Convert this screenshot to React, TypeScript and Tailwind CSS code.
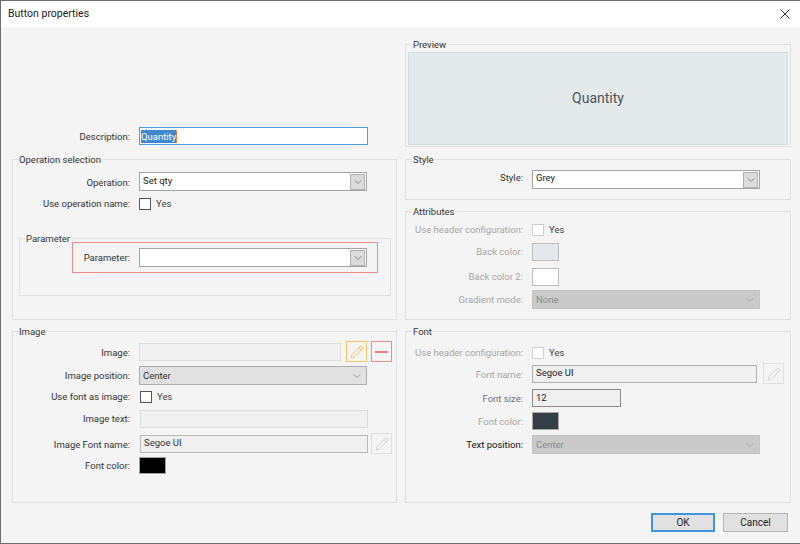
import type { ReactNode } from "react"
import { ChevronDown, Pencil } from "lucide-react"

function Group({ title, className, legendClass, children }: { title: string; className: string; legendClass?: string; children?: ReactNode }) {
  return (
    <div className={`border border-[#e0e0e0] ${className}`}>
      <div className={`-mt-[7px] h-[13px] w-fit bg-[#f4f4f4] px-px leading-[14px] ${legendClass ?? "ml-[5px]"}`}>{title}</div>
      {children}
    </div>
  )
}

function Row({ label, className, labelClass, children }: { label: string; className: string; labelClass?: string; children: ReactNode }) {
  return (
    <div className={`flex items-center ${className}`}>
      <div className={`w-[117px] shrink-0 whitespace-nowrap text-right leading-[14px] ${labelClass ?? "text-[#333]"}`}>{label}</div>
      <div className="ml-[9px] flex items-center">{children}</div>
    </div>
  )
}

function Combo({ value, className, valueClass }: { value: string; className: string; valueClass?: string }) {
  return (
    <div className={`flex h-[19px] items-center border border-[#a4a4a4] bg-white ${className}`}>
      <span className={`flex-1 pl-[3px] text-[#222] ${valueClass ?? ""}`}>{value}</span>
      <span className="mr-px flex h-[16px] w-[15px] items-center justify-center border border-[#b0b0b0] bg-[#dcdcdc]">
        <ChevronDown size={12} strokeWidth={1.3} className="text-[#606060]" />
      </span>
    </div>
  )
}

function FlatSelect({ value, className, bg, color, border }: { value: string; className: string; bg: string; color: string; border: string }) {
  return (
    <div className={`flex h-[19px] items-center border ${bg} ${color} ${border} ${className}`}>
      <span className="flex-1 pl-[3px] pt-px">{value}</span>
      <ChevronDown size={12} strokeWidth={1.2} className="mr-[3px] opacity-70" />
    </div>
  )
}

function Check({ label, disabled }: { label: string; disabled?: boolean }) {
  return (
    <div className="flex items-center">
      <span className={`h-[12px] w-[12px] border ${disabled ? "border-[#d0d0d0] bg-white" : "border-[#555] bg-white"}`} />
      <span className="ml-[5px] leading-[12px] text-[#444]">{label}</span>
    </div>
  )
}

function Swatch({ className }: { className: string }) {
  return <div className={`w-[27px] border ${className}`} />
}

function EditButton({ className, iconClass }: { className: string; iconClass: string }) {
  return (
    <span className={`flex h-[21px] w-[21px] items-center justify-center border ${className}`}>
      <Pencil size={14} strokeWidth={1.5} className={iconClass} />
    </span>
  )
}

const disabledLabel = "text-[#a6a6a6]"
const rightLegend = "ml-[6px]"

export default function App() {
  return (
    <div className="flex h-[544px] w-[800px] flex-col overflow-hidden border-y border-l border-[#6e6e6e] bg-[#f4f4f4] font-['Roboto',sans-serif] text-[9.5px] text-[#333]">
      <div className="flex h-[26px] items-center justify-between bg-white pl-[7px] pr-[10px]">
        <span className="text-[10.5px] text-[#222]">Button properties</span>
        <svg width="10" height="10" viewBox="0 0 10 10" className="mb-[1px]">
          <path d="M0.5 0.5 9.5 9.5M9.5 0.5 0.5 9.5" stroke="#333" strokeWidth="1" fill="none" />
        </svg>
      </div>

      <div className="flex">
        <div className="ml-[11px] w-[385px]">
          <div className="mt-[100px] flex items-center">
            <div className="w-[118px] pt-[2px] text-right leading-[14px]">Description:</div>
            <div className="ml-[9px] flex h-[18px] w-[229px] items-center border border-[#4a9fdc] bg-white pl-px">
              <span className="border-r border-[#e8853a] bg-[#3f87cf] leading-[13px] text-white">Quantity</span>
            </div>
          </div>

          <Group title="Operation selection" className="mt-[14px] h-[161px]">
            <Row label="Operation:" labelClass="pt-[2px] text-[#333]" className="mt-[6px]">
              <Combo value="Set qty" className="w-[228px]" />
            </Row>
            <Row label="Use operation name:" className="mt-[7px] h-[12px]">
              <Check label="Yes" />
            </Row>
            <Group title="Parameter" className="ml-[6px] mt-[28px] h-[58px] w-[372px]">
              <div className="-mt-[3px] ml-[52px] flex h-[31px] w-[306px] items-center border border-[#ee8a8a]">
                <div className="w-[57px] shrink-0 text-right leading-[14px]">Parameter:</div>
                <div className="ml-[9px]">
                  <Combo value="" className="w-[228px]" />
                </div>
              </div>
            </Group>
          </Group>

          <Group title="Image" className="mt-[11px] h-[172px]">
            <Row label="Image:" labelClass="pt-[2px] text-[#333]" className="mt-[3px] h-[21px]">
              <div className="h-[18px] w-[202px] border border-[#dcdcdc] bg-[#f1f1f1]" />
              <EditButton className="ml-[5px] border-[#f6c761]" iconClass="text-[#f2bc4e]" />
              <span className="ml-[4px] flex h-[21px] w-[21px] items-center justify-center border border-[#ef8a8d]">
                <span className="h-[2px] w-[13px] bg-[#ef8083]" />
              </span>
            </Row>
            <Row label="Image position:" className="mt-[4px]">
              <FlatSelect value="Center" className="w-[228px]" bg="bg-[#e1e1e1]" color="text-[#333]" border="border-[#adadad]" />
            </Row>
            <Row label="Use font as image:" className="mt-[6px] h-[12px]">
              <div className="ml-px">
                <Check label="Yes" />
              </div>
            </Row>
            <Row label="Image text:" className="mt-[7px]">
              <div className="ml-px h-[18px] w-[228px] border border-[#dcdcdc] bg-[#f1f1f1]" />
            </Row>
            <Row label="Image Font name:" labelClass="pt-[2px] text-[#333]" className="mt-[5px] h-[21px]">
              <div className="ml-px flex h-[18px] w-[228px] items-center border border-[#b9b9b9] bg-[#f0f0f0] pl-[3px] text-[#333]">Segoe UI</div>
              <EditButton className="ml-[3px] border-[#e0e0e0]" iconClass="text-[#cfcfcf]" />
            </Row>
            <Row label="Font color:" className="mt-[3px]">
              <Swatch className="h-[17px] border-[#a0a0a0] bg-black" />
            </Row>
          </Group>
        </div>

        <div className="ml-[8px] w-[386px]">
          <Group title="Preview" legendClass={rightLegend} className="mt-[17px] h-[103px]">
            <div className="ml-[2px] mt-px flex h-[93px] w-[380px] items-center justify-center border border-[#d3dddf] bg-[#e4e9eb] text-[14px] text-[#4b565d]">
              Quantity
            </div>
          </Group>

          <Group title="Style" legendClass={rightLegend} className="mt-[12px] h-[41px]">
            <Row label="Style:" labelClass="pb-[3px] text-[#333]" className="mt-[4px]">
              <Combo value="Grey" valueClass="pb-[2px]" className="w-[228px]" />
            </Row>
          </Group>

          <Group title="Attributes" legendClass={rightLegend} className="mt-[11px] h-[109px]">
            <Row label="Use header configuration:" labelClass={disabledLabel} className="mt-[6px] h-[12px]">
              <Check label="Yes" disabled />
            </Row>
            <Row label="Back color:" labelClass={disabledLabel} className="mt-[7px]">
              <Swatch className="h-[18px] border-[#bdbdbd] bg-[#e4e9eb]" />
            </Row>
            <Row label="Back color 2:" labelClass={disabledLabel} className="mt-[7px]">
              <Swatch className="h-[18px] border-[#bdbdbd] bg-white" />
            </Row>
            <Row label="Gradient mode:" labelClass={disabledLabel} className="mt-[4px]">
              <FlatSelect value="None" className="w-[228px]" bg="bg-[#cacaca]" color="text-[#8a8a8a]" border="border-[#c4c4c4]" />
            </Row>
          </Group>

          <Group title="Font" legendClass={rightLegend} className="mt-[11px] h-[172px]">
            <Row label="Use header configuration:" labelClass={disabledLabel} className="mt-[9px] h-[12px]">
              <Check label="Yes" disabled />
            </Row>
            <Row label="Font name:" labelClass={`pt-[2px] ${disabledLabel}`} className="mt-[4px] h-[21px]">
              <div className="flex h-[18px] w-[225px] items-center border border-[#b0b0b0] bg-[#f0f0f0] pl-[3px] text-[#222]">Segoe UI</div>
              <EditButton className="ml-[6px] border-[#e0e0e0]" iconClass="text-[#cfcfcf]" />
            </Row>
            <Row label="Font size:" className="mt-[5px]" labelClass="pt-[2px] text-[#6f6f6f]">
              <div className="flex h-[18px] w-[89px] items-center border border-[#8a8a8a] bg-[#f0f0f0] pl-[3px] text-[#222]">12</div>
            </Row>
            <Row label="Font color:" labelClass={`pt-[2px] ${disabledLabel}`} className="mt-[5px]">
              <Swatch className="h-[18px] border-[#a8a8a8] bg-[#343f45]" />
            </Row>
            <Row label="Text position:" className="mt-[5px]" labelClass="text-[#111]">
              <FlatSelect value="Center" className="w-[228px]" bg="bg-[#cacaca]" color="text-[#8a8a8a]" border="border-[#c4c4c4]" />
            </Row>
          </Group>
        </div>
      </div>

      <div className="mt-[10px] flex justify-end gap-[8px] pr-[12px] text-[10px]">
        <button className="h-[19px] w-[64px] border-2 border-[#3f96dc] bg-[#e1e1e1] text-[#222]">OK</button>
        <button className="h-[19px] w-[65px] border border-[#b5b5b5] bg-[#e1e1e1] text-[#222]">Cancel</button>
      </div>
    </div>
  )
}
